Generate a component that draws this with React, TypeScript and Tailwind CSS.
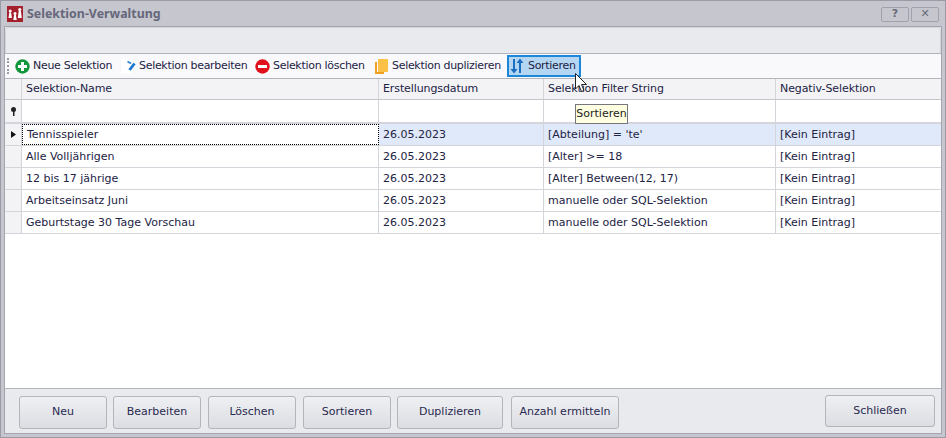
const rows = [
  { name: "Tennisspieler", date: "26.05.2023", filter: "[Abteilung] = 'te'", neg: "[Kein Eintrag]" },
  { name: "Alle Volljährigen", date: "26.05.2023", filter: "[Alter] >= 18", neg: "[Kein Eintrag]" },
  { name: "12 bis 17 jährige", date: "26.05.2023", filter: "[Alter] Between(12, 17)", neg: "[Kein Eintrag]" },
  { name: "Arbeitseinsatz Juni", date: "26.05.2023", filter: "manuelle oder SQL-Selektion", neg: "[Kein Eintrag]" },
  { name: "Geburtstage 30 Tage Vorschau", date: "26.05.2023", filter: "manuelle oder SQL-Selektion", neg: "[Kein Eintrag]" },
];

const gridCols = "grid grid-cols-[17px_357px_165px_232px_1fr]";

function AppLogo() {
  return (
    <svg width="16" height="16" viewBox="0 0 16 16" className="shrink-0">
      <rect width="16" height="16" fill="#a4202c" />
      <circle cx="3.200" cy="5" r="1.500" fill="#fff" />
      <path d="M2.300 6.500h1.800l.8 5.500H1.500z" fill="#fff" />
      <circle cx="8" cy="7.500" r="1.500" fill="#fff" />
      <path d="M7.100 9h1.800l.8 5H6.300z" fill="#fff" />
      <circle cx="12.800" cy="3.500" r="1.600" fill="#fff" />
      <path d="M11.700 5h2.200l.9 7h-4z" fill="#fff" />
    </svg>
  );
}

function MinusIcon() {
  return (
    <svg width="15" height="15" viewBox="0 0 15 15">
      <circle cx="7.5" cy="7.5" r="7.2" fill="#e0101c" />
      <rect x="3" y="6" width="9" height="3" fill="#fff" />
    </svg>
  );
}

function PlusIcon() {
  return (
    <svg width="15" height="15" viewBox="0 0 15 15">
      <circle cx="7.5" cy="7.5" r="7.2" fill="#10963c" />
      <path d="M6 3h3v3h3v3H9v3H6V9H3V6h3z" fill="#fff" />
    </svg>
  );
}

function EditIcon() {
  return (
    <svg width="15" height="15" viewBox="0 0 15 15">
      <rect width="10" height="15" fill="#ffffff" />
      <path d="M6.500 2.500 10 4.500" fill="none" stroke="#2b7fcf" strokeWidth="1.500" />
      <path d="M13.500 4.500 8.500 11" fill="none" stroke="#1b78d0" strokeWidth="2.800" />
    </svg>
  );
}

function CopyIcon() {
  return (
    <svg width="13" height="15" viewBox="0 0 13 15">
      <path d="M0 3h2v10h7v2H0z" fill="#f0a020" />
      <rect x="3" y="0" width="10" height="13" rx="1" fill="#fbc044" />
    </svg>
  );
}

function SortIcon() {
  return (
    <svg width="14" height="16" viewBox="0 0 14 16" fill="#1a6fc0">
      <path d="M3 1h2v10h2.500L4 15.500.5 11H3z" />
      <path d="M9 15h2V5h2.500L10 .5 6.500 5H9z" />
    </svg>
  );
}

function ToolItem({ icon, label, active, className }: { icon: React.ReactNode; label: string; active?: boolean; className?: string }) {
  return (
    <div
      className={`flex h-[22px] items-center gap-[3px] whitespace-nowrap tracking-[-0.3px] ${
        active ? "border-2 border-[#1b87d8] bg-[#b5d6f2]" : ""
      } ${className ?? ""}`}
    >
      <span className="flex w-[16px] justify-center">{icon}</span>
      <span>{label}</span>
    </div>
  );
}

function BottomButton({ label, className }: { label: string; className: string }) {
  return (
    <button className={`rounded-[3px] border border-[#b4b5bc] bg-gradient-to-b from-[#eff0f3] to-[#dcdde2] text-[#2a2a50] ${className}`}>
      {label}
    </button>
  );
}

export default function App() {
  return (
    <div className="relative flex h-[438px] w-[946px] flex-col overflow-hidden border border-[#9a9ba6] bg-[#c5c6ce] px-[4px] pb-[4px] font-['DejaVu_Sans',sans-serif] text-[11px] text-[#222244]">
      {/* title bar */}
      <div className="flex h-[26px] shrink-0 items-center gap-[4px] pl-[2px] pr-[2px]">
        <AppLogo />
        <span className="flex-1 font-['Noto_Sans',sans-serif] text-[12.4px] font-bold text-[#66677a]">Selektion-Verwaltung</span>
        <div className="flex gap-[2px]">
          <div className="flex h-[15px] w-[28px] items-center justify-center rounded-[2px] border border-[#a0a1ac] text-[11px] font-bold text-[#6a6b78]">?</div>
          <div className="flex h-[15px] w-[28px] items-center justify-center rounded-[2px] border border-[#a0a1ac] text-[11px] font-bold text-[#6a6b78]">✕</div>
        </div>
      </div>

      <div className="flex min-h-0 flex-1 flex-col bg-[#e9eaee] outline outline-1 outline-[#a4a5b0]">
        {/* empty ribbon strip */}
        <div className="h-[26px] shrink-0 rounded-t-[3px] border border-b-0 border-[#d4d5da] bg-[#e9eaee]" />

        {/* toolbar */}
        <div className="flex h-[26px] shrink-0 items-center border-y border-[#b4b5bc] bg-[#f9f9fb] pl-[2px]">
          <div className="mr-[5px] h-[16px] w-[2px] border-l-2 border-dotted border-[#9a9ba4]" />
          <ToolItem icon={<PlusIcon />} label="Neue Selektion" className="w-[106px]" />
          <ToolItem icon={<EditIcon />} label="Selektion bearbeiten" className="w-[134px]" />
          <ToolItem icon={<MinusIcon />} label="Selektion löschen" className="w-[119px]" />
          <ToolItem icon={<CopyIcon />} label="Selektion duplizieren" className="w-[134px]" />
          <ToolItem icon={<SortIcon />} label="Sortieren" active className="w-[74px]" />
        </div>

        {/* grid */}
        <div className="min-h-0 flex-1 bg-white">
          <div className={`${gridCols} h-[21px] items-center border-b border-[#c4c5cc] bg-[#f3f3f6]`}>
            <div className="h-full border-r border-[#d4d5da]" />
            {["Selektion-Name", "Erstellungsdatum", "Selektion Filter String", "Negativ-Selektion"].map((h) => (
              <div key={h} className="flex h-full items-center border-r border-[#d4d5da] pl-[4px] tracking-[-0.1px] last:border-r-0">
                {h}
              </div>
            ))}
          </div>
          <div className={`${gridCols} h-[24px] border-b-2 border-[#d4d5da]`}>
            <div className="flex items-center justify-center border-r border-[#d4d5da] bg-[#f3f3f6]">
              <svg width="7" height="9" viewBox="0 0 7 9">
                <circle cx="3.500" cy="2.500" r="2.500" fill="#222" />
                <rect x="3" y="4" width="1.500" height="5" fill="#222" />
              </svg>
            </div>
            <div className="border-r border-[#d4d5da]" />
            <div className="border-r border-[#d4d5da]" />
            <div className="border-r border-[#d4d5da]" />
            <div />
          </div>
          {rows.map((r, i) => (
            <div key={r.name} className={`${gridCols} h-[22px] border-b border-[#d4d5da] ${i === 0 ? "bg-[#e0e9f9]" : ""}`}>
              <div className="flex items-center justify-center border-r border-[#d4d5da] bg-[#f3f3f6]">
                {i === 0 && (
                  <svg width="5" height="7" viewBox="0 0 5 7">
                    <path d="M0 0l5 3.500L0 7z" fill="#111" />
                  </svg>
                )}
              </div>
              <div className={`flex items-center pl-[4px] pt-[1px] ${i === 0 ? "border border-dotted border-black bg-white" : "border-r border-[#d4d5da]"}`}>
                {r.name}
              </div>
              <div className="flex items-center border-r border-[#d4d5da] pl-[4px] pt-[1px]">{r.date}</div>
              <div className="flex items-center border-r border-[#d4d5da] pl-[4px] pt-[1px]">{r.filter}</div>
              <div className="flex items-center pl-[4px] pt-[1px]">{r.neg}</div>
            </div>
          ))}
        </div>

        {/* footer */}
        <div className="flex h-[45px] shrink-0 items-center border-t border-[#b4b5bc] pl-[14px] pr-[6px]">
          <div className="flex flex-1 pt-[3px]">
            <BottomButton label="Neu" className="mr-[6px] h-[33px] w-[88px]" />
            <BottomButton label="Bearbeiten" className="mr-[7px] h-[33px] w-[88px]" />
            <BottomButton label="Löschen" className="mr-[7px] h-[33px] w-[88px]" />
            <BottomButton label="Sortieren" className="mr-[6px] h-[33px] w-[88px]" />
            <BottomButton label="Duplizieren" className="mr-[8px] h-[33px] w-[106px]" />
            <BottomButton label="Anzahl ermitteln" className="h-[33px] w-[108px]" />
          </div>
          <BottomButton label="Schließen" className="h-[32px] w-[110px]" />
        </div>
      </div>

      {/* tooltip */}
      <div className="absolute left-[574px] top-[103px] flex h-[20px] w-[53px] items-center justify-center border border-[#76767c] bg-[#ffffe1] text-[#222]">
        Sortieren
      </div>
      {/* mouse pointer */}
      <svg className="absolute left-[574px] top-[72px]" width="13" height="20" viewBox="0 0 13 20">
        <path d="M.5.500V16l3.500-3.500 2.500 6 2.500-1-2.500-6h5z" fill="#fff" stroke="#222" strokeWidth="1" />
      </svg>
    </div>
  );
}
